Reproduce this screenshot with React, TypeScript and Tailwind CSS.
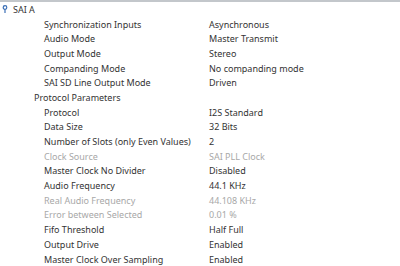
import React from 'react';

// 行データ
interface Row {
  label: string;
  value?: string;
  indent: number;
  disabled?: boolean;
}

const rows: Row[] = [
  { label: 'Synchronization Inputs', value: 'Asynchronous', indent: 2 },
  { label: 'Audio Mode', value: 'Master Transmit', indent: 2 },
  { label: 'Output Mode', value: 'Stereo', indent: 2 },
  { label: 'Companding Mode', value: 'No companding mode', indent: 2 },
  { label: 'SAI SD Line Output Mode', value: 'Driven', indent: 2 },
  { label: 'Protocol Parameters', indent: 1 },
  { label: 'Protocol', value: 'I2S Standard', indent: 2 },
  { label: 'Data Size', value: '32 Bits', indent: 2 },
  { label: 'Number of Slots (only Even Values)', value: '2', indent: 2 },
  { label: 'Clock Source', value: 'SAI PLL Clock', indent: 2, disabled: true },
  { label: 'Master Clock No Divider', value: 'Disabled', indent: 2 },
  { label: 'Audio Frequency', value: '44.1 KHz', indent: 2 },
  { label: 'Real Audio Frequency', value: '44.108 KHz', indent: 2, disabled: true },
  { label: 'Error between Selected', value: '0.01 %', indent: 2, disabled: true },
  { label: 'Fifo Threshold', value: 'Half Full', indent: 2 },
  { label: 'Output Drive', value: 'Enabled', indent: 2 },
  { label: 'Master Clock Over Sampling', value: 'Enabled', indent: 2 },
];

export default function App() {
  return (
    <div
      className="w-[400px] h-[266px] overflow-hidden bg-white text-[9px] text-[#333]"
      style={{ fontFamily: '"Noto Sans", "Open Sans", sans-serif' }}
    >
      {/* 上部のバー */}
      <div className="h-[2px] bg-[#c3c7cb]" />

      {/* ツリー */}
      <div className="flex flex-col">
        <div className="flex items-center h-[14.7px] leading-none">
          <svg width="6" height="8" viewBox="0 0 6 8" className="ml-[2px] mr-[5px]">
            <circle cx="3" cy="2.5" r="1.8" fill="none" stroke="#3b6fb6" strokeWidth="1.2" />
            <line x1="3" y1="4.2" x2="3" y2="8" stroke="#3b6fb6" strokeWidth="1.2" />
          </svg>
          <span>SAI A</span>
        </div>
        {rows.map((r) => (
          <div
            key={r.label}
            className={`flex items-center h-[14.7px] leading-none ${r.disabled ? 'text-[#a8a8a8]' : ''}`}
          >
            <span className={`${r.indent === 1 ? 'pl-[34px]' : 'pl-[44px]'} w-[209px] shrink-0 whitespace-nowrap`}>
              {r.label}
            </span>
            {r.value && <span className="whitespace-nowrap">{r.value}</span>}
          </div>
        ))}
      </div>
    </div>
  );
}
